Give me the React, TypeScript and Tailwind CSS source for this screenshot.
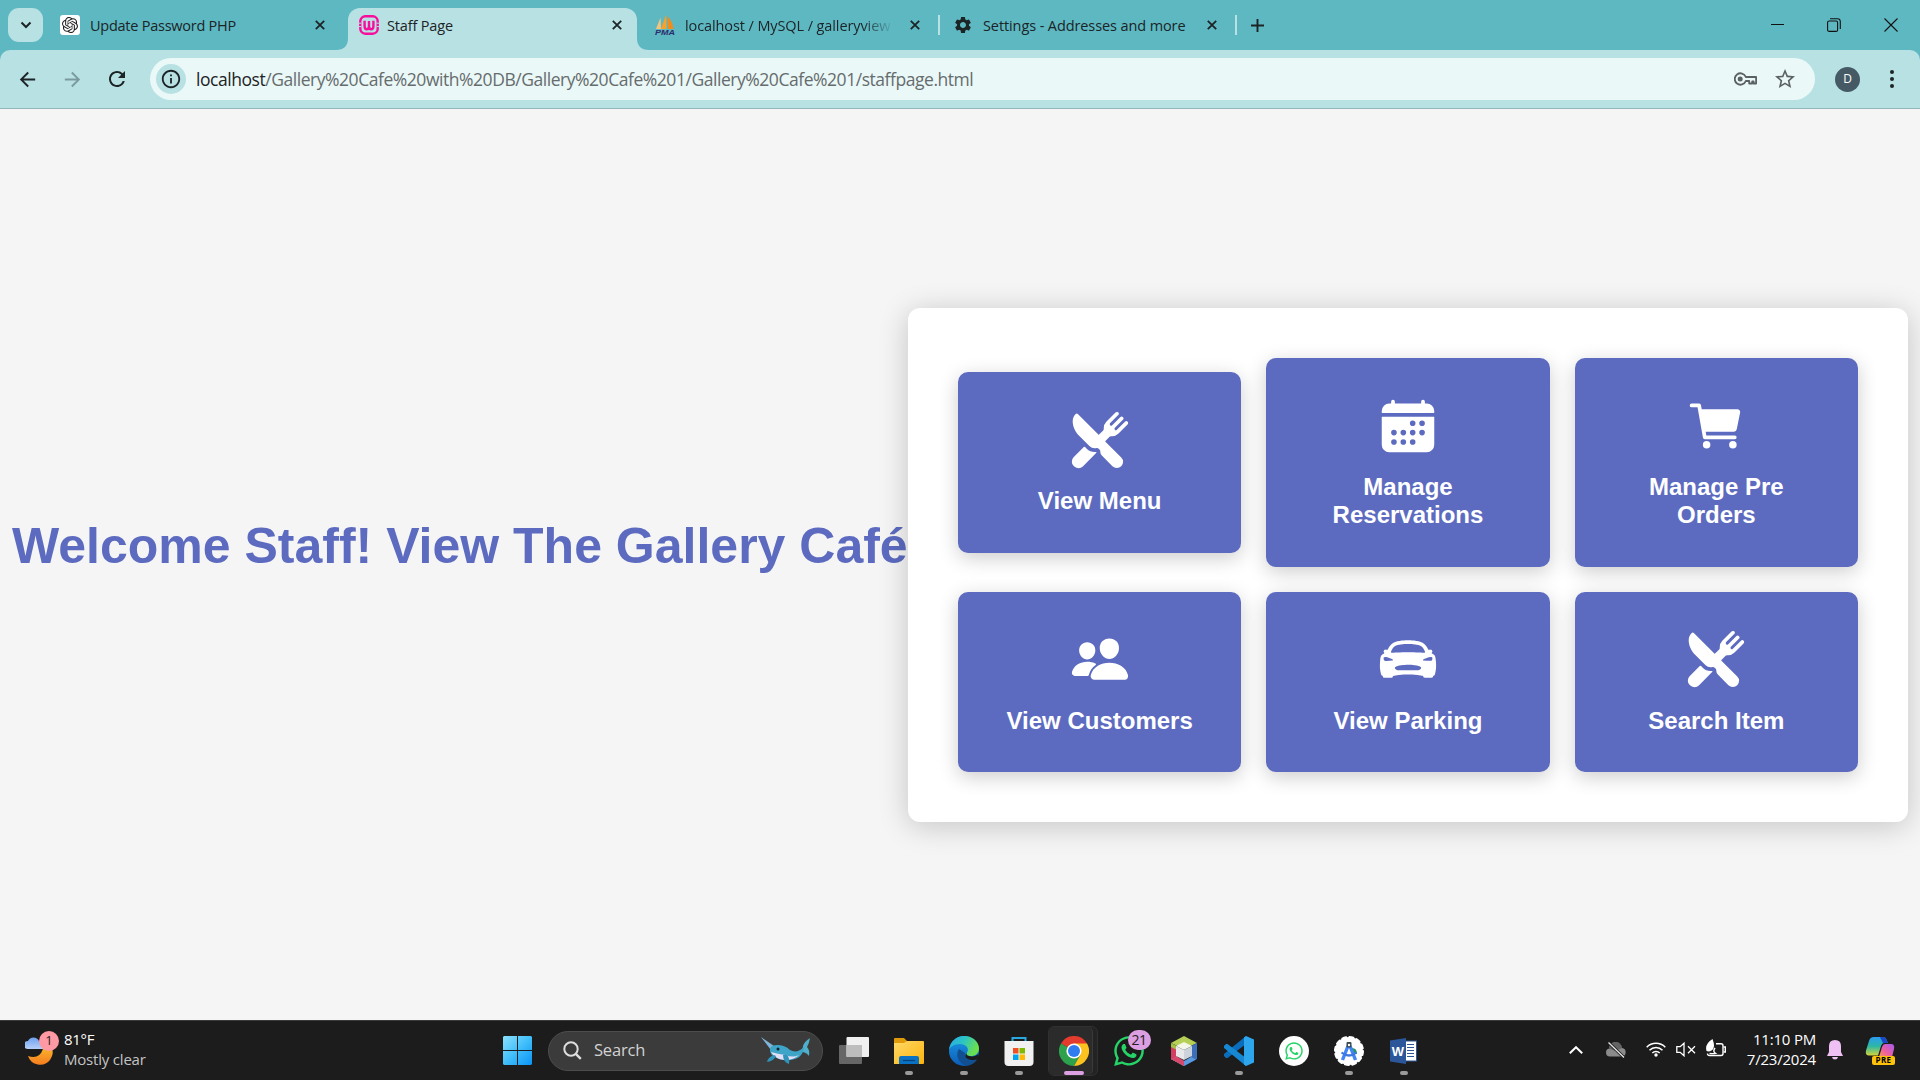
import type { ReactNode } from "react";
import { IoRestaurant, IoCalendar, IoCart, IoPeople, IoCarSport } from "react-icons/io5";
import { MdArrowBack, MdArrowForward, MdRefresh, MdSettings, MdInfoOutline, MdStarBorder } from "react-icons/md";
import { FaWhatsapp } from "react-icons/fa";
import { SiOpenai } from "react-icons/si";

function CloseX() {
  return (
    <svg className="h-[10px] w-[10px] shrink-0" viewBox="0 0 10 10" stroke="#1c2426" strokeWidth="1.8" fill="none">
      <path d="M.8.8l8.4 8.4M9.2.8L.8 9.2" />
    </svg>
  );
}

function WampIcon() {
  return (
    <svg className="h-5 w-5 shrink-0" viewBox="0 0 20 20" fill="none" stroke="#f70f9c">
      <rect x="1.3" y="1.3" width="17.4" height="17.4" rx="5" strokeWidth="2.400" />
      <path d="M5.6 5.8v5.4q0 3 2.2 3 2.2 0 2.2-3V6v5.200q0 3 2.200 3t2.200-3V5.800" strokeWidth="2.400" />
      <path d="M0 8.200h2.500M0 11.600h2.500M17.500 8.200H20M17.500 11.600H20" stroke="#b8e1e4" strokeWidth="1" />
    </svg>
  );
}

function PmaIcon() {
  return (
    <svg className="h-5 w-5 shrink-0" viewBox="0 0 20 20">
      <path d="M5.500 2.500L1 14h5z" fill="#f7c27a" />
      <path d="M11 0L6 14h5.500z" fill="#f9a22a" />
      <path d="M12 1l1 13h5.500q-1-8-6.500-13z" fill="#f08c1c" />
      <text x="0" y="20" fontSize="8" fontWeight="700" fontStyle="italic" fontFamily="Liberation Sans, sans-serif" fill="#2c2b6b" textLength="20" lengthAdjust="spacingAndGlyphs">PMA</text>
    </svg>
  );
}

function TabStrip() {
  return (
    <div className="flex h-[50px] w-full items-center bg-[#5db8c2] text-[14.5px] text-[#1c2426]">
      <div className="ml-2 flex h-[34px] w-[35px] items-center justify-center rounded-[11px] bg-[#b8e1e4]">
        <svg className="h-2 w-3" viewBox="0 0 12 8" fill="none" stroke="#1c2426" strokeWidth="2">
          <path d="M1.500 1.500L6 6l4.500-4.500" />
        </svg>
      </div>
      <div className="ml-[17px] flex w-[265px] items-center">
        <span className="flex h-5 w-5 items-center justify-center rounded-[3px] bg-white">
          <SiOpenai size={16} color="#222" />
        </span>
        <span className="ml-[10px] w-[225px] whitespace-nowrap pt-[2px] tracking-[-0.25px]">Update Password PHP</span>
        <CloseX />
      </div>
      <div className="mt-2 flex h-[42px] w-[313px] items-end">
        <svg className="h-3 w-3 shrink-0 ml-[11px]" viewBox="0 0 12 12"><path d="M0 12Q12 12 12 0V12z" fill="#b8e1e4" /></svg>
        <div className="flex h-[42px] w-[289px] shrink-0 items-center rounded-t-[12px] bg-[#b8e1e4] pb-2 pl-[11px]">
          <WampIcon />
          <span className="ml-2 w-[225px] whitespace-nowrap pt-[2px] tracking-[-0.15px]">Staff Page</span>
          <CloseX />
        </div>
        <svg className="h-3 w-3 shrink-0" viewBox="0 0 12 12"><path d="M12 12Q0 12 0 0V12z" fill="#b8e1e4" /></svg>
      </div>
      <div className="ml-[17px] flex items-center">
        <PmaIcon />
        <span className="ml-[10px] w-[213px] overflow-hidden whitespace-nowrap pt-[2px] tracking-[-0.1px] [mask-image:linear-gradient(to_right,black_83%,transparent_98%)]">localhost / MySQL / galleryview</span>
        <span className="ml-[12px] flex"><CloseX /></span>
        <span className="ml-[18px] h-5 w-[2px] bg-[#b8e1e4]" />
        <span className="ml-[13px] flex"><MdSettings size={20} /></span>
        <span className="ml-[10px] w-[224px] whitespace-nowrap pt-[2px] tracking-[-0.1px]">Settings - Addresses and more</span>
        <CloseX />
        <span className="ml-[18px] h-5 w-[2px] bg-[#b8e1e4]" />
        <svg className="ml-[14px] h-[13px] w-[13px]" viewBox="0 0 13 13" stroke="#1c2426" strokeWidth="1.900"><path d="M6.500 0v13M0 6.500h13" /></svg>
      </div>
      <div className="ml-auto mr-[22px] flex items-center gap-[43px]">
        <svg className="h-[14px] w-[13px]" viewBox="0 0 13 14" stroke="#111"><path d="M0 6.500h13" /></svg>
        <svg className="h-[14px] w-[14px]" viewBox="0 0 14 14" fill="none" stroke="#111" strokeWidth="1.100"><rect x=".6" y="3" width="10" height="10.400" rx="1.500" /><path d="M3 .8h7.500q2.800 0 2.800 2.800v7.500" /></svg>
        <svg className="h-[14px] w-[14px]" viewBox="0 0 14 14" stroke="#111" strokeWidth="1.100"><path d="M.5.500l13 13M13.500.500l-13 13" /></svg>
      </div>
    </div>
  );
}

function Toolbar() {
  return (
    <div className="bg-[#5db8c2]">
      <div className="flex h-[59px] items-center rounded-t-[10px] border-b border-[#91b5b9] bg-[#b8e1e4] text-[#1c2426]">
        <span className="ml-4 flex"><MdArrowBack size={23} /></span>
        <span className="ml-[22px] flex text-[#7a9a9d]"><MdArrowForward size={23} /></span>
        <span className="ml-[21px] flex"><MdRefresh size={24} /></span>
        <div className="ml-[21px] flex h-[42px] w-[1665px] items-center rounded-full bg-[#ebf8f8]">
          <span className="ml-[6px] flex h-[30px] w-[30px] items-center justify-center rounded-full bg-[#b8e1e4]">
            <MdInfoOutline size={22} />
          </span>
          <span className="ml-[10px] whitespace-nowrap pt-px text-[17.5px] tracking-[-0.455px] text-[#656c6d]">
            <span className="text-[#1c2426]">localhost</span>/Gallery%20Cafe%20with%20DB/Gallery%20Cafe%201/Gallery%20Cafe%201/staffpage.html
          </span>
          <svg className="ml-auto h-4 w-[23px]" viewBox="0 0 23 16" fill="none" stroke="#5b6162" strokeWidth="1.800">
            <path d="M11.800 6h10.300v6.500h-2.500v-2h-1.400v2h-3V10h-3.400A5.700 5.700 0 1 1 11.800 6z" strokeLinejoin="round" />
            <circle cx="6.200" cy="8" r="2.500" fill="#5b6162" stroke="none" />
          </svg>
          <span className="ml-4 mr-[18px] flex text-[#5b6162]"><MdStarBorder size={24} /></span>
        </div>
        <span className="ml-5 flex h-[25px] w-[25px] items-center justify-center rounded-full bg-[#455a64] text-[12px] text-white">D</span>
        <svg className="ml-[30px] h-5 w-1" viewBox="0 0 4 20" fill="#1c2426"><circle cx="2" cy="3" r="2" /><circle cx="2" cy="10" r="2" /><circle cx="2" cy="17" r="2" /></svg>
      </div>
    </div>
  );
}

type TileProps = { icon: ReactNode; label: string; className: string };

function Tile({ icon, label, className }: TileProps) {
  return (
    <div className={`flex flex-col items-center rounded-[10px] bg-[#5c6bc0] px-10 text-center text-2xl font-bold leading-7 text-white shadow-[0_5px_20px_rgba(0,0,0,0.2)] ${className}`}>
      {icon}
      <span>{label}</span>
    </div>
  );
}

function StaffPage() {
  return (
    <main className="flex h-[911px] items-center bg-[#f5f5f5] font-['Liberation_Sans',Arial,sans-serif]">
      <h1 className="mb-[38px] ml-3 w-[896px] whitespace-nowrap text-[50px] font-bold leading-[58px] text-[#5c6bc0]">Welcome Staff! View The Gallery Café</h1>
      <section className="grid h-[514px] w-[1000px] grid-cols-3 grid-rows-[209px_180px] items-center gap-[25px] rounded-[12px] bg-white p-[50px] shadow-[0_4px_30px_rgba(0,0,0,0.2)]">
        <Tile icon={<IoRestaurant size={60} />} label="View Menu" className="h-[181px] gap-[17px] pt-[38px]" />
        <Tile icon={<IoCalendar size={60} />} label="Manage Reservations" className="h-[209px] gap-[17px] pt-[38px]" />
        <Tile icon={<IoCart size={60} />} label="Manage Pre Orders" className="h-[209px] gap-[17px] pt-[38px]" />
        <Tile icon={<IoPeople size={60} />} label="View Customers" className="h-[180px] gap-[18px] pt-[37px]" />
        <Tile icon={<IoCarSport size={60} />} label="View Parking" className="h-[180px] gap-[18px] pt-[37px]" />
        <Tile icon={<IoRestaurant size={60} />} label="Search Item" className="h-[180px] gap-[18px] pt-[37px]" />
      </section>
    </main>
  );
}

function AppSlot({ children, running }: { children: ReactNode; running?: boolean }) {
  return (
    <div className="flex h-[50px] w-[55px] flex-col items-center pt-[10px]">
      <div className="relative flex h-[30px] w-[30px] items-center justify-center">{children}</div>
      {running && <span className="mt-[5px] h-1 w-2 rounded-full bg-[#9a9a9a]" />}
    </div>
  );
}

function Weather() {
  return (
    <div className="flex w-[503px] items-center pb-1 pl-[25px]">
      <div className="relative h-[34px] w-[34px]">
        <svg className="h-[34px] w-[34px]" viewBox="0 0 34 34">
          <defs>
            <linearGradient id="moon" x1="0" y1="0" x2="0" y2="1"><stop stopColor="#fbc02d" /><stop offset="1" stopColor="#f57c1f" /></linearGradient>
            <linearGradient id="cloud" x1="0" y1="0" x2="0" y2="1"><stop stopColor="#6ea0ee" /><stop offset="1" stopColor="#b5d0fa" /></linearGradient>
          </defs>
          <path d="M26 13q4 8-1 15a12.700 12.700 0 0 1-22-4Q14 28 18 17L20 12z" fill="url(#moon)" />
          <path d="M3 17a4 4 0 0 1 0-8 6 6 0 0 1 11 0q5 1 4 8z" fill="url(#cloud)" />
        </svg>
        <span className="absolute -top-px left-[14px] flex h-5 w-5 items-center justify-center rounded-full bg-[#ff99a4] text-[13px] text-[#222]">1</span>
      </div>
      <div className="ml-[5px] text-[15px] leading-5 tracking-[-0.3px]">
        <div className="text-white">81°F</div>
        <div className="tracking-[-0.2px] text-[#c4c4c4]">Mostly clear</div>
      </div>
    </div>
  );
}

function Narwhal() {
  return (
    <svg className="h-7 w-[50px]" viewBox="0 0 50 28">
      <path d="M0 0l13 9-3 4z" fill="#7fb5d8" />
      <path d="M37 15q5-2 5-6 1-4 7-8-1 6-3 9 3 3 2 9-4-5-11-4z" fill="#4fb0cc" />
      <path d="M9 14q-1-6 7-6 8 0 13 5 7 4 14-3-1 12-14 13-9 1-15-3-4-1-5-6z" fill="#3fa5c8" />
      <path d="M10 15q7 2 14 3 8 3 14 0-5 5-14 5-10-1-14-8z" fill="#e4def5" />
      <path d="M13 18q-6 2-7 7 7-1 9-6zM22 18q0 7 6 9 1-6-2-9z" fill="#2f93ba" />
      <circle cx="17" cy="12" r="1.500" fill="#12222e" />
    </svg>
  );
}

function TaskbarApps() {
  return (
    <div className="flex items-center">
      <svg className="h-[29px] w-[29px]" viewBox="0 0 29 29">
        <defs><linearGradient id="win" x1="0" y1="0" x2="1" y2="1"><stop stopColor="#8be1fd" /><stop offset=".5" stopColor="#41bffa" /><stop offset="1" stopColor="#0a93f5" /></linearGradient></defs>
        <path d="M1 0h13v14H0V1zM15 0h13l1 1v13H15zM0 15h14v14H1l-1-1zM15 15h14v13l-1 1H15z" fill="url(#win)" />
      </svg>
      <div className="ml-4 flex h-10 w-[275px] items-center rounded-full border border-[#4d4d4d] bg-[#3b3b3b] pl-[14px] pr-[11px]">
        <svg className="h-[19px] w-[19px]" viewBox="0 0 19 19" fill="none" stroke="#dedede" strokeWidth="2"><circle cx="8" cy="8" r="6.700" /><path d="M12.800 12.800l5 5" strokeWidth="2.400" /></svg>
        <span className="ml-[12px] text-[16.500px] tracking-[-0.2px] text-[#d2d2d2]">Search</span>
        <span className="ml-auto flex"><Narwhal /></span>
      </div>
      <div className="ml-[3px] flex">
        <AppSlot>
          <svg className="h-[30px] w-[30px]" viewBox="0 0 30 30"><rect y="9" width="23" height="19" rx="1" fill="#666" /><rect x="7.500" y="1" width="22.500" height="20" rx="1" fill="#f0f0f0" /><path d="M7.500 9H23v12H7.500z" fill="#bdbdbd" /></svg>
        </AppSlot>
        <AppSlot running>
          <svg className="h-[30px] w-[30px]" viewBox="0 0 30 30">
            <defs><linearGradient id="fold" x1="0" y1="0" x2="1" y2="1"><stop stopColor="#ffd968" /><stop offset="1" stopColor="#fbb40c" /></linearGradient></defs>
            <path d="M0 3q0-1 1-1h9l3 3v6H0z" fill="#e09b0b" /><path d="M0 7h10l3-2h16q1 0 1 1v21q0 1-1 1H0z" fill="url(#fold)" /><path d="M5 28v-6q0-2 2-2h16q2 0 2 2v6z" fill="#0a72c4" /><path d="M9 24.500h12" stroke="#06437d" strokeWidth="1.300" />
          </svg>
        </AppSlot>
        <AppSlot running>
          <svg className="h-[30px] w-[30px]" viewBox="0 0 30 30">
            <defs>
              <linearGradient id="edgeTop" x1="0" y1="0" x2="1" y2=".4"><stop stopColor="#28a8e8" /><stop offset=".5" stopColor="#2cc4c4" /><stop offset="1" stopColor="#6be04f" /></linearGradient>
              <linearGradient id="edgeLow" x1="0" y1="0" x2="0" y2="1"><stop stopColor="#1a9ae8" /><stop offset="1" stopColor="#0d5cb6" /></linearGradient>
            </defs>
            <circle cx="15" cy="15" r="15" fill="url(#edgeLow)" />
            <path d="M0 14C1 5 8 0 15 0c9 0 15 6 15 12.500 0 5-4 7.500-8 7.500-4 0-5.500-1.500-4-3.500C21 12 16 8 11 8 5 8 1 11 0 14z" fill="url(#edgeTop)" />
            <path d="M10 13c-4 5-1 15 8 16.700 5-.5 8-3 10-6.200-5 2.500-13 1-12-6.500z" fill="#124f91" />
            <path d="M17.500 17q-.6 3 5 3.500 5 0 7-3l-.3 3q-1 2-1.700 3-7 2-11-2-1-2 1-4.500z" fill="#1c1c1c" />
          </svg>
        </AppSlot>
        <AppSlot running>
          <svg className="h-[30px] w-[30px]" viewBox="0 0 30 30"><path d="M8.500 6V2h13v4" fill="none" stroke="#2aa9e0" strokeWidth="2" /><path d="M.5 5h29v21q0 4-4 4h-21q-4 0-4-4z" fill="#f1f1f1" /><path d="M9 12h5.500v5.500H9z" fill="#f25022" /><path d="M15.500 12H21v5.500h-5.500z" fill="#7fba00" /><path d="M9 18.500h5.500V24H9z" fill="#00a4ef" /><path d="M15.500 18.500H21V24h-5.500z" fill="#ffb900" /></svg>
        </AppSlot>
        <div className="flex h-[50px] w-[55px] pl-[2px]">
          <div className="flex w-[50px] rounded-[6px] border border-[#303030] bg-[#232323]">
            <div className="flex w-[44px] shrink-0 flex-col items-center rounded-[5px] border-r border-[#3a3a3a] bg-[#2b2b2b] pl-[6px] pt-[9px]">
              <svg className="h-[30px] w-[30px]" viewBox="0 0 30 30">
                <path d="M15 15L2 7.500A15 15 0 0 1 28 7.500z" fill="#e33b2e" /><path d="M15 15L2 7.500A15 15 0 0 0 15 30l6.500-11z" fill="#2da14c" /><path d="M15 7.500h13A15 15 0 0 1 15 30l6.500-11.200z" fill="#fcc31e" /><circle cx="15" cy="15" r="7.600" fill="#fff" /><circle cx="15" cy="15" r="6" fill="#2f7bf0" />
              </svg>
              <span className="mt-[5px] h-1 w-5 rounded-full bg-[#dc9fe2]" />
            </div>
          </div>
        </div>
        <AppSlot>
          <FaWhatsapp size={34} color="#25d366" className="shrink-0" />
          <span className="absolute -top-[6px] left-[14px] flex h-5 w-[23px] items-center justify-center rounded-full bg-[#dc9fe2] text-[14px] tracking-[-0.5px] text-[#222]">21</span>
        </AppSlot>
        <AppSlot>
          <svg className="h-[30px] w-[30px]" viewBox="0 0 30 30"><path d="M15 0l13 7-13 6L2 7z" fill="#b6cf56" /><path d="M2 7l6 3v11l7 9L2 23z" fill="#a4c04a" /><path d="M2 11l6 3 0 8 7 8L2 23z" fill="#d23d62" /><path d="M28 7l-6 3v11l-7 9 13-7z" fill="#3c6fb8" /><path d="M7 21l8 4 7-4 5 2.500L15 30 2 23z" fill="#5b9ae0" /><path d="M2 23l5-3 8 5v5z" fill="#d9476c" /><path d="M15 6l8 4-8 4-8-4z" fill="#f4f7e8" /><path d="M7 10l8 4v10l-8-4z" fill="#e8e8ea" /><path d="M23 10l-8 4v10l8-4z" fill="#ccd3dc" /></svg>
        </AppSlot>
        <AppSlot running>
          <svg className="h-[30px] w-[30px]" viewBox="0 0 30 30"><path d="M22 0L0 18v2l2 2h1.500L22 8z" fill="#0a6ebd" /><path d="M22 30L0 12v-2l2-2h1.500L22 22z" fill="#1687d3" /><path d="M22 0l8 3.500v23L22 30l-2-1.500V1.500z" fill="#2ea6ee" /></svg>
        </AppSlot>
        <AppSlot>
          <span className="flex h-[30px] w-[30px] items-center justify-center rounded-full bg-white"><FaWhatsapp size={20} color="#25d366" /></span>
        </AppSlot>
        <AppSlot running>
          <svg className="h-[30px] w-[30px]" viewBox="0 0 30 30" fill="none"><circle cx="15" cy="15" r="14" fill="#fff" /><circle cx="15" cy="15" r="14" stroke="#fff" strokeWidth="2" strokeDasharray="4 3.330" strokeLinecap="round" /><path d="M18 12q5 0 5 6h-5z" fill="#23965a" /><path d="M14 10L8.500 24M16 10l5.500 14" stroke="#4285f4" strokeWidth="3.400" /><path d="M7.500 16.500q7.500 6 15 0" stroke="#3b78e0" strokeWidth="2.200" /><rect x="12.500" y="6" width="5" height="5.500" rx="1" fill="#3b4a52" /><circle cx="15" cy="9" r="1.200" fill="#fff" /></svg>
        </AppSlot>
        <AppSlot running>
          <svg className="h-[30px] w-[30px]" viewBox="0 0 30 30"><rect x="14" y="5" width="13.500" height="20" fill="#fff" stroke="#2b5797" strokeWidth="1" /><path d="M18 8.500h7M18 11.500h7M18 14.500h7M18 17.500h7M18 20.500h7" stroke="#2b5797" strokeWidth="1.200" /><path d="M1 4.500L17 2v26L1 25.500z" fill="#2b579a" /><text x="2.800" y="20" fontSize="13" fontWeight="700" fontFamily="Liberation Sans, sans-serif" fill="#fff">W</text></svg>
        </AppSlot>
      </div>
    </div>
  );
}

function Tray() {
  return (
    <div className="ml-auto flex items-center pb-[2px]">
      <svg className="h-2 w-[14px]" viewBox="0 0 14 8" fill="none" stroke="#fff" strokeWidth="2"><path d="M.8 7.200L7 1.200l6.200 6" /></svg>
      <svg className="ml-[23px] h-4 w-5" viewBox="0 0 20 16"><path d="M4 14.500a4 4 0 0 1 0-8A6.500 6.500 0 0 1 16 6a4.300 4.300 0 0 1 0 8.500z" fill="#8b8b8b" /><path d="M3 6.500a6.500 6.500 0 0 1 13-.5l-7 3z" fill="#636363" /><path d="M2.500.500l15.500 15" stroke="#1c1c1c" strokeWidth="3" /><path d="M2.500.500l15.500 15" stroke="#e8e8e8" strokeWidth="1.300" /></svg>
      <svg className="ml-5 h-[15px] w-5" viewBox="0 0 20 15" fill="none" stroke="#fff" strokeWidth="1.500"><path d="M.7 5.200a13 13 0 0 1 18.600 0M3.500 8.200a9 9 0 0 1 13 0M6.300 11a5.300 5.300 0 0 1 7.400 0" /><circle cx="10" cy="13" r="1.700" fill="#fff" stroke="none" /></svg>
      <svg className="ml-[10px] h-[15px] w-5" viewBox="0 0 20 15" fill="none" stroke="#fff" strokeWidth="1.300"><path d="M8 1.200v12.600L4.200 10.300H.8V4.700h3.400zM12 4.300l7 7M19 4.300l-7 7" /></svg>
      <svg className="mb-[3px] ml-[10px] h-[18px] w-5" viewBox="0 0 20 18" fill="none" stroke="#fff" strokeWidth="1.400"><path d="M10 4.700h5q2 0 2 2v7.800q0 2-2 2H3.500q-2 0-2-2" /><path d="M17.500 8h1.800v5h-1.800" /><path d="M.5 12Q-1.500 5 6.500 0q3.500 9-1 11.500Q3 13 .5 12z" fill="#fff" stroke="none" /><path d="M3.500 14.500q4 .3 6-.2-3-1.500-.5-5.500" /></svg>
      <div className="ml-[20px] w-[70px] whitespace-nowrap pb-[2px] text-right text-[15px] leading-5 tracking-[-0.2px] text-white">
        <div>11:10 PM</div>
        <div>7/23/2024</div>
      </div>
      <svg className="ml-[11px] h-5 w-4" viewBox="0 0 16 20" fill="#efc0f3"><path d="M8 0q6 0 6 6v6l2 4H0l2-4V6q0-6 6-6zM5 17h6q-.5 2.500-3 2.500T5 17z" /></svg>
      <div className="relative ml-[22px] mr-[25px] h-[30px] w-[30px]">
        <svg className="h-[30px] w-[30px]" viewBox="0 0 30 30">
          <defs>
            <linearGradient id="copA" x1="0" y1="0" x2="0" y2="1"><stop stopColor="#2a9cf2" /><stop offset=".5" stopColor="#2cb7a4" /><stop offset="1" stopColor="#d4d43a" /></linearGradient>
            <linearGradient id="copB" x1="1" y1="0" x2="0" y2="1"><stop stopColor="#a55cf0" /><stop offset=".6" stopColor="#f0609c" /><stop offset="1" stopColor="#f79a4e" /></linearGradient>
          </defs>
          <path d="M9 2h9q3 0 4 4l1 2h-4q-2 0-3 3l-3 9.500H4q-4 0-3-5L4 6q1-4 5-4z" fill="url(#copA)" />
          <path d="M15 2h3q3 0 4 4l1 2h-5z" fill="#1b48c9" />
          <path d="M20 9h6q4 0 3 5l-2 8H14l3-10q1-3 3-3z" fill="url(#copB)" />
        </svg>
        <span className="absolute left-[7px] top-[21px] flex h-[9px] w-[23px] items-center justify-center rounded-[2px] bg-[#ffc20a] text-[8px] font-bold tracking-[0.4px] text-black">PRE</span>
      </div>
    </div>
  );
}

export default function App() {
  return (
    <div className="flex h-[1080px] w-[1920px] flex-col overflow-hidden font-['Open_Sans','Noto_Sans',sans-serif]">
      <TabStrip />
      <Toolbar />
      <StaffPage />
      <footer className="flex h-[60px] items-center border-t border-[#3a3a3a] bg-[#1c1c1c]">
        <Weather />
        <TaskbarApps />
        <Tray />
      </footer>
    </div>
  );
}
